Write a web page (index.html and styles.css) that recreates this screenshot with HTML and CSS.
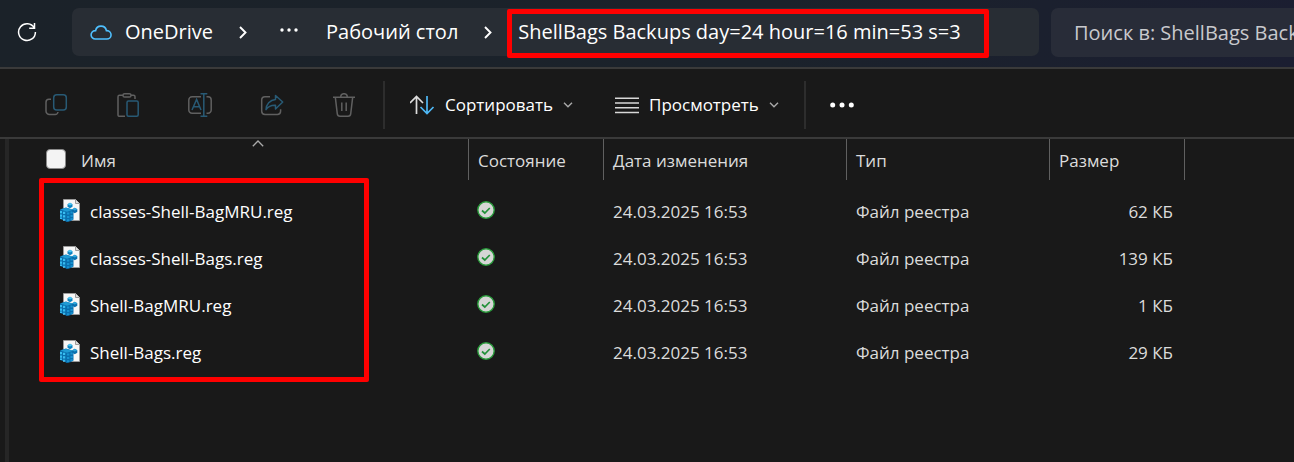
FILE: index.html
```html
<!DOCTYPE html>
<html lang="ru">
<head>
<meta charset="utf-8">
<title>ShellBags Backups</title>
<link rel="stylesheet" href="styles.css">
</head>
<body>
<svg class="defs" width="0" height="0" aria-hidden="true">
  <symbol id="reg" viewBox="0 0 20 24">
    <path d="M3.500 1.500H15.500L19.500 5.500V22.500H3.500Z" fill="#f7f7f7" stroke="#9b9b9b"/>
    <path d="M15.500 1.500v4h4" fill="#ddd" stroke="#9b9b9b"/>
    <path d="M0 11.500 2.500 10.500 6 9.500l4 1.300 3.500 1.200v9.500L11 23l-4.500 1-2-1.500L0 21Z" fill="#0a6fae"/>
    <path d="M.5 11.500 6 9.700l7 2-6 2Z" fill="#1f9bd4"/>
    <path d="M0 13h2v2.200H0zM3 13.800h2.200V16H3zM0 16.500h2v2.200H0zM3 17.300h2.200v2.200H3zM0 19.500h2V21H0zM3 20.700h2.200v1.800H3z" fill="#38bdf0"/>
    <path d="M7 14.500h2.300v2H7zM10.500 13.500h2.300v2h-2.300zM7 18h2.300v2H7zM10.500 17h2.300v2h-2.300zM7 21.300h2.300v2H7zM10.500 20.300h2.300v1.800h-2.300z" fill="#1793d1"/>
    <path d="m10 4.800 2.500 1.400v2.600L10 10.200 7.500 8.800V6.200Z" fill="#0d83c1"/><path d="m10 4.800 2.500 1.400L10 7.600 7.500 6.200Z" fill="#4cc6f2"/>
    <path d="m14.800 9.800 2.500 1.400v2.600l-2.500 1.400-2.500-1.400v-2.600Z" fill="#0a6fae"/><path d="m14.800 9.800 2.500 1.400-2.500 1.400-2.500-1.400Z" fill="#2ea9de"/>
  </symbol>
  <symbol id="ok" viewBox="0 0 18 18">
    <circle cx="9" cy="9" r="8.200" fill="#d6d6d6" stroke="#2a9c3c" stroke-width="1.400"/>
    <path d="M5 9.500 7.800 12l5-5" fill="none" stroke="#23913a" stroke-width="1.700"/>
  </symbol>
  <symbol id="down" viewBox="0 0 10 6"><path d="M1 .8 5 4.800 9 .8" fill="none" stroke="#aaa" stroke-width="1.400"/></symbol>
  <symbol id="next" viewBox="0 0 8 13"><path d="M1 1 6.500 6.500 1 12" fill="none" stroke="#fff" stroke-width="1.900"/></symbol>
</svg>

<header class="nav">
  <button class="refresh" aria-label="Обновить">
    <svg width="20" height="20" viewBox="0 0 20 20" fill="none" stroke="#fff" stroke-width="1.500"><path d="M17.300 6A8.400 8.400 0 1 0 18.400 10M17.500 1v5.200h-5.300"/></svg>
  </button>
  <nav class="address" aria-label="Путь">
    <svg class="cloud" width="22" height="18" viewBox="0 0 22 18" fill="none" stroke="#4fc0ff" stroke-width="1.600"><path d="M5.500 16h11.200a4.200 4.200 0 0 0 .3-8.400h-.6A5.500 5.500 0 0 0 5.600 7.600h-.5A4.200 4.200 0 0 0 5.500 16Z"/></svg>
    <a class="crumb" href="#">OneDrive</a>
    <svg class="sep" width="8" height="13"><use href="#next"/></svg>
    <button class="more" aria-label="Ещё"><svg width="18" height="4" viewBox="0 0 18 4" fill="#fff"><circle cx="2" cy="2" r="1.700"/><circle cx="9" cy="2" r="1.700"/><circle cx="16" cy="2" r="1.700"/></svg></button>
    <a class="crumb" href="#">Рабочий стол</a>
    <svg class="sep" width="8" height="13"><use href="#next"/></svg>
    <a class="crumb current" href="#">ShellBags Backups day=24 hour=16 min=53 s=3</a>
  </nav>
  <input class="search" type="text" aria-label="Поиск" placeholder="Поиск в: ShellBags Backups">
</header>

<div class="toolbar" role="toolbar">
  <button class="tool" aria-label="Копировать"><svg width="24" height="24" viewBox="0 0 24 24" fill="none" stroke-width="1.500"><rect x="9.700" y="1.700" width="12.600" height="15.200" rx="3" stroke="#285a75"/><path d="M7 6.200H5a3 3 0 0 0-3 3V18a3.500 3.500 0 0 0 3.500 3.500H11a3 3 0 0 0 3-2.500" stroke="#606060"/></svg></button>
  <button class="tool" aria-label="Вставить"><svg width="24" height="24" viewBox="0 0 24 24" fill="none" stroke-width="1.500" stroke="#606060"><path d="M7 2.200H3.500a1.500 1.500 0 0 0-1.500 1.500V22a1.300 1.300 0 0 0 1.300 1.300H9M15 2.200h2.500A1.500 1.500 0 0 1 19 3.700V6"/><rect x="7" y=".8" width="8" height="3.200" rx="1.600"/><rect x="11" y="8" width="11.200" height="15.200" rx="1.500" stroke="#285a75"/></svg></button>
  <button class="tool" aria-label="Переименовать"><svg width="24" height="24" viewBox="0 0 24 24" fill="none" stroke-width="1.500"><path d="M13 3.800H4a3.200 3.200 0 0 0-3.200 3.200v10A3.200 3.200 0 0 0 4 20.300h9M18.500 3.800H20a3.200 3.200 0 0 1 3.200 3.200v10a3.200 3.200 0 0 1-3.200 3.300h-1.500" stroke="#606060"/><path d="M4 17 8.600 6.500 13 17M5.500 13.700h6.200M15.800 1v22M12.500.8h6.800M12.500 23.200h6.800" stroke="#285a75"/></svg></button>
  <button class="tool" aria-label="Поделиться"><svg width="24" height="24" viewBox="0 0 24 24" fill="none" stroke-width="1.500"><path d="M10 3.700H5a3.300 3.300 0 0 0-3.300 3.300v11.300A3.300 3.300 0 0 0 5 21.500h12.300a3.300 3.300 0 0 0 3.300-3.200v-2" stroke="#606060"/><path d="M15.500 2.500 22.700 9l-7.200 7v-3.800C11 12 8 13.500 6 16.700 6 11.500 10 6.800 15.500 6.400Z" stroke="#285a75" stroke-linejoin="round"/></svg></button>
  <button class="tool" aria-label="Удалить"><svg width="24" height="24" viewBox="0 0 24 24" fill="none" stroke="#606060" stroke-width="1.500"><path d="M1 4.200h22M3.300 4.200l2 16.600A2.700 2.700 0 0 0 8 23.200h8a2.700 2.700 0 0 0 2.700-2.400l2-16.600M8.700 4a3.300 3.300 0 0 1 6.600 0M9.800 9.500v8.500M14.200 9.500v8.500"/></svg></button>
  <span class="rule"></span>
  <button class="menu"><svg width="25" height="20" viewBox="0 0 25 20" fill="none" stroke-width="1.700"><path d="M6.500 19V1.500M0 8l6.500-6.500L13 8" stroke="#ddd"/><path d="M17 1v17.500M10.500 12l6.500 6.500 6.500-6.500" stroke="#4fb8f5"/></svg><span>Сортировать</span><svg width="10" height="6"><use href="#down"/></svg></button>
  <button class="menu view"><svg width="24" height="17" viewBox="0 0 24 17" stroke="#d8d8d8" stroke-width="1.500"><path d="M0 1.200h24M0 6h24M0 10.800h24M0 15.600h24"/></svg><span>Просмотреть</span><svg width="10" height="6"><use href="#down"/></svg></button>
  <span class="rule"></span>
  <button class="dots" aria-label="Дополнительно"><svg width="24" height="6" viewBox="0 0 24 6" fill="#fff"><circle cx="2.700" cy="3" r="2.500"/><circle cx="12" cy="3" r="2.500"/><circle cx="21.300" cy="3" r="2.500"/></svg></button>
</div>

<main class="files">
  <table>
    <colgroup><col class="c-name"><col class="c-state"><col class="c-date"><col class="c-type"><col class="c-size"><col></colgroup>
    <thead><tr>
      <th><div class="head-name"><input type="checkbox" id="all" aria-label="Выбрать все"><label for="all">Имя</label></div>
        <svg class="sort" width="12" height="7" viewBox="0 0 12 7"><path d="M.8 6.200 6 1l5.200 5.200" fill="none" stroke="#aaa" stroke-width="1.300"/></svg></th>
      <th>Состояние</th><th>Дата изменения</th><th>Тип</th><th>Размер</th><th class="rest"></th>
    </tr></thead>
    <tbody>
      <tr><td><div class="file"><svg width="20" height="24"><use href="#reg"/></svg><span>classes-Shell-BagMRU.reg</span></div></td><td><svg class="state" width="18" height="18"><use href="#ok"/></svg></td><td>24.03.2025 16:53</td><td>Файл реестра</td><td class="size">62 КБ</td><td></td></tr>
      <tr><td><div class="file"><svg width="20" height="24"><use href="#reg"/></svg><span>classes-Shell-Bags.reg</span></div></td><td><svg class="state" width="18" height="18"><use href="#ok"/></svg></td><td>24.03.2025 16:53</td><td>Файл реестра</td><td class="size">139 КБ</td><td></td></tr>
      <tr><td><div class="file"><svg width="20" height="24"><use href="#reg"/></svg><span>Shell-BagMRU.reg</span></div></td><td><svg class="state" width="18" height="18"><use href="#ok"/></svg></td><td>24.03.2025 16:53</td><td>Файл реестра</td><td class="size">1 КБ</td><td></td></tr>
      <tr><td><div class="file"><svg width="20" height="24"><use href="#reg"/></svg><span>Shell-Bags.reg</span></div></td><td><svg class="state" width="18" height="18"><use href="#ok"/></svg></td><td>24.03.2025 16:53</td><td>Файл реестра</td><td class="size">29 КБ</td><td></td></tr>
    </tbody>
  </table>
  <div class="mark"></div>
</main>
</body>
</html>
```

FILE: styles.css
```css
* { box-sizing: border-box; }
body {
  margin: 0;
  min-height: 100vh;
  display: flex;
  flex-direction: column;
  background: #191919;
  color: #fff;
  font: 17px/24px "Open Sans", "Noto Sans", sans-serif;
  overflow-x: hidden;
}
button { display: flex; align-items: center; justify-content: center; padding: 0; border: 0; background: none; color: inherit; font: inherit; }
svg { display: block; flex: none; }
.defs { position: absolute; }

.nav {
  display: flex;
  align-items: center;
  height: 69px;
  padding: 0 0 3px 17px;
  border-bottom: 2px solid #3a3a3a;
  background: linear-gradient(100deg, #1b2229 0%, #1b222b 60%, #1b1e31 100%);
}
.refresh { width: 20px; height: 48px; }
.address {
  flex: 1;
  display: flex;
  align-items: center;
  height: 48px;
  margin: 0 12px 0 35px;
  padding-left: 18px;
  border-radius: 7px;
  background: #282d34;
  font-size: 20px;
  white-space: nowrap;
}
.crumb { color: #fff; text-decoration: none; }
.cloud { margin-right: 13px; }
.sep { margin: 0 26px; }
.more { width: 18px; margin: 0 28px 4px 7px; }
.current { position: relative; }
.current::after {
  content: "";
  position: absolute;
  inset: -11px -28px -14px -11px;
  border: 5px solid #f00;
  border-radius: 2px;
}
.search {
  flex: 0 0 243px;
  width: 243px;
  height: 49px;
  padding: 0 0 0 23px;
  border: 0;
  border-radius: 7px 0 0 7px;
  background: #282c38;
  color: #fff;
  font: 20px/24px "Open Sans", "Noto Sans", sans-serif;
}
.search::placeholder { color: #c8c9cd; opacity: 1; }

.toolbar {
  display: flex;
  align-items: center;
  height: 70px;
  padding: 4px 20px 0;
  border-bottom: 2px solid #3a3a3a;
}
.tool { width: 72px; height: 48px; }
.rule { width: 2px; height: 48px; margin-left: 3px; background: #2d2d2d; }
.menu { margin-left: 25px; gap: 10px; }
.view { margin-left: 42px; }
.view + .rule { margin-left: 25px; }
.dots { margin-left: 24px; height: 48px; }

.files {
  flex: 1;
  position: relative;
  margin-left: 5px;
  border-left: 4px solid #262626;
}
table { width: 100%; table-layout: fixed; border-collapse: separate; border-spacing: 0; }
.c-name { width: 460px; }
.c-state { width: 135px; }
.c-date { width: 243px; }
.c-type { width: 203px; }
.c-size { width: 135px; }
th, td { padding: 0 12px 0 9px; text-align: left; font-weight: 400; white-space: nowrap; color: #dcdcdc; }
th { position: relative; height: 41px; border-right: 1px solid #606060; padding-top: 2px; }
th.rest { border: 0; }
.head-name { display: flex; align-items: center; gap: 15px; padding-left: 28px; }
.head-name input {
  appearance: none;
  width: 20px;
  height: 20px;
  margin: 0 0 4px;
  border: 1px solid #8a8a8a;
  border-radius: 4px;
  background: #f3f3f3;
}
.sort { position: absolute; top: 1px; left: 243px; }
td { height: 47px; }
tbody::before { content: ""; display: block; height: 8px; }
.file { display: flex; align-items: center; gap: 10px; padding-left: 42px; color: #fff; }
.file svg { margin-bottom: 4px; }
.state { margin: 0 0 4px -1px; }
.size { text-align: right; }
.mark {
  position: absolute;
  top: 39px;
  left: 30px;
  width: 330px;
  height: 204px;
  border: 5px solid #f00;
  border-radius: 2px;
  pointer-events: none;
}
```
